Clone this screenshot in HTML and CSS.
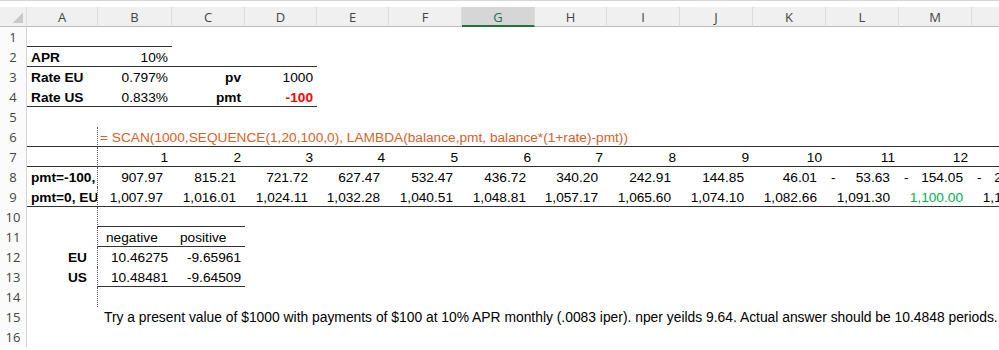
FILE: index.html
```html
<!DOCTYPE html>
<html lang="en">
<head>
    <meta charset="UTF-8">
    <title>SCAN balance</title>
    <link rel="stylesheet" href="styles.css">
</head>
<body>
    <div class="sheet">
        <div class="topbar"></div>

        <div class="row head">
            <div class="corner"></div>
            <div class="col">A</div>
            <div class="col">B</div>
            <div class="col">C</div>
            <div class="col">D</div>
            <div class="col">E</div>
            <div class="col">F</div>
            <div class="col sel">G</div>
            <div class="col">H</div>
            <div class="col">I</div>
            <div class="col">J</div>
            <div class="col">K</div>
            <div class="col">L</div>
            <div class="col">M</div>
            <div class="col"></div>
        </div>

        <div class="row">
            <div class="num">1</div>
            <div class="cell u"></div>
            <div class="cell u"></div>
        </div>
        <div class="row">
            <div class="num">2</div>
            <div class="cell u b">APR</div>
            <div class="cell u r">10%</div>
            <div class="cell u"></div>
            <div class="cell u"></div>
        </div>
        <div class="row">
            <div class="num">3</div>
            <div class="cell b">Rate EU</div>
            <div class="cell r">0.797%</div>
            <div class="cell r b">pv</div>
            <div class="cell r">1000</div>
        </div>
        <div class="row">
            <div class="num">4</div>
            <div class="cell u b">Rate US</div>
            <div class="cell u r">0.833%</div>
            <div class="cell u r b">pmt</div>
            <div class="cell u r b red">-100</div>
        </div>
        <div class="row">
            <div class="num">5</div>
        </div>
        <div class="row">
            <div class="num">6</div>
            <div class="cell u dl"></div>
            <div class="cell u fx wide">= SCAN(1000,SEQUENCE(1,20,100,0), LAMBDA(balance,pmt, balance*(1+rate)-pmt))</div>
        </div>
        <div class="row">
            <div class="num">7</div>
            <div class="cell u dl"></div>
            <div class="cell u r">1</div>
            <div class="cell u r">2</div>
            <div class="cell u r">3</div>
            <div class="cell u r">4</div>
            <div class="cell u r">5</div>
            <div class="cell u r">6</div>
            <div class="cell u r">7</div>
            <div class="cell u r">8</div>
            <div class="cell u r">9</div>
            <div class="cell u r">10</div>
            <div class="cell u r">11</div>
            <div class="cell u r">12</div>
            <div class="cell u r"></div>
        </div>
        <div class="row">
            <div class="num">8</div>
            <div class="cell b dl">pmt=-100,</div>
            <div class="cell r acc">907.97</div>
            <div class="cell r acc">815.21</div>
            <div class="cell r acc">721.72</div>
            <div class="cell r acc">627.47</div>
            <div class="cell r acc">532.47</div>
            <div class="cell r acc">436.72</div>
            <div class="cell r acc">340.20</div>
            <div class="cell r acc">242.91</div>
            <div class="cell r acc">144.85</div>
            <div class="cell r acc">46.01</div>
            <div class="cell neg"><span>-</span><span>53.63</span></div>
            <div class="cell neg"><span>-</span><span>154.05</span></div>
            <div class="cell neg"><span>-</span><span>255.28</span></div>
        </div>
        <div class="row">
            <div class="num">9</div>
            <div class="cell u b dl">pmt=0, EU</div>
            <div class="cell u r acc">1,007.97</div>
            <div class="cell u r acc">1,016.01</div>
            <div class="cell u r acc">1,024.11</div>
            <div class="cell u r acc">1,032.28</div>
            <div class="cell u r acc">1,040.51</div>
            <div class="cell u r acc">1,048.81</div>
            <div class="cell u r acc">1,057.17</div>
            <div class="cell u r acc">1,065.60</div>
            <div class="cell u r acc">1,074.10</div>
            <div class="cell u r acc">1,082.66</div>
            <div class="cell u r acc">1,091.30</div>
            <div class="cell u r acc green">1,100.00</div>
            <div class="cell u r acc">1,108.77</div>
        </div>
        <div class="row">
            <div class="num">10</div>
            <div class="cell dl"></div>
            <div class="cell u"></div>
            <div class="cell u"></div>
        </div>
        <div class="row">
            <div class="num">11</div>
            <div class="cell dl"></div>
            <div class="cell u ind">negative</div>
            <div class="cell u ind">positive</div>
        </div>
        <div class="row">
            <div class="num">12</div>
            <div class="cell r b dl lab">EU</div>
            <div class="cell r">10.46275</div>
            <div class="cell r">-9.65961</div>
        </div>
        <div class="row">
            <div class="num">13</div>
            <div class="cell r b dl lab">US</div>
            <div class="cell u r">10.48481</div>
            <div class="cell u r">-9.64509</div>
        </div>
        <div class="row">
            <div class="num">14</div>
            <div class="cell dl"></div>
        </div>
        <div class="row">
            <div class="num">15</div>
            <div class="cell"></div>
            <div class="cell wide note">Try a present value of $1000 with payments of $100 at 10% APR monthly (.0083 iper). nper yeilds 9.64. Actual answer should be 10.4848 periods.</div>
        </div>
        <div class="row">
            <div class="num">16</div>
        </div>
    </div>
</body>
</html>
```

FILE: styles.css
```css
body{
    margin: 0;
    background-color: #fff;
    overflow: hidden;
    font-family: "Liberation Sans", Arial, sans-serif;
}
.sheet{
    width: 999px;
    overflow: hidden;
}
.topbar{
    height: 6px;
    border-top: 1px solid #d6d6d6;
}
.row{
    display: grid;
    grid-template-columns: 27px 71px 74px 73px 72px 72px 73px 73px 72px 73px 73px 73px 73px 73px 73px;
    height: 20px;
}

/* headers */
.head .col,
.corner{
    box-sizing: border-box;
    height: 20px;
    background-color: #f0f0f0;
    border-bottom: 1px solid #bcbcbc;
    border-right: 1px solid #dcdcdc;
    font-family: "Open Sans", sans-serif;
    font-size: 13px;
    line-height: 20px;
    text-align: center;
    color: #444;
}
.corner{
    background: linear-gradient(to top left, #c9c9c9 50%, transparent 50%) no-repeat right 3px bottom 3px / 11px 11px, #f0f0f0;
}
.head .sel{
    background-color: #d6d6d6;
    color: #217346;
    border-bottom: 2px solid #217346;
}
.num{
    box-sizing: border-box;
    height: 20px;
    background-color: #fbfbfb;
    border-right: 1px solid #d4d4d4;
    font-family: "Open Sans", sans-serif;
    font-size: 13px;
    line-height: 20px;
    text-align: center;
    color: #444;
}

/* cells */
.cell{
    box-sizing: border-box;
    height: 20px;
    padding: 0 4px;
    font-size: 13.7px;
    line-height: 21px;
    white-space: nowrap;
    overflow: hidden;
    color: #000;
}
.u{
    border-bottom: 1px solid #333;
}
.dl{
    border-right: 1px dotted #555;
}
.b{
    font-weight: bold;
}
.r{
    text-align: right;
}
.acc{
    padding-right: 9px;
}
.lab{
    padding-right: 10px;
}
.ind{
    padding-left: 8px;
}
.neg{
    display: flex;
    justify-content: space-between;
    padding: 0 9px 0 5px;
}
.red{
    color: #ff0000;
}
.green{
    color: #00b050;
}
.wide{
    grid-column: 3 / -1;
    overflow: visible;
    padding-left: 2px;
}
.fx{
    color: #d4622a;
}
.note{
    padding-left: 6px;
    font-size: 13.85px;
}
```
